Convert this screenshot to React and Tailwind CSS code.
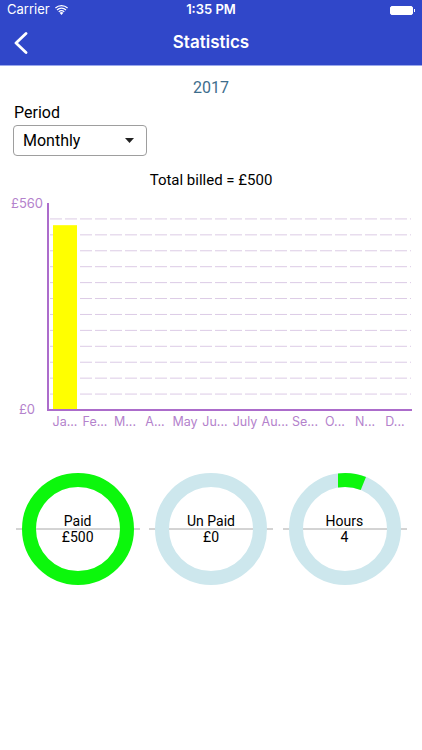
import React from 'react';

const MONTHS = ['Ja...', 'Fe...', 'M...', 'A...', 'May', 'Ju...', 'July', 'Au...', 'Se...', 'O...', 'N...', 'D...'];

function StatusBar() {
  return (
    <div className="relative flex h-[20px] items-center justify-between px-[7px] font-['Inter',sans-serif] text-[13px] text-white">
      <div className="flex items-center gap-[5px]">
        <span>Carrier</span>
        <svg width="13" height="10" viewBox="0 0 13 10" fill="white">
          <path d="M6.5 10 L4.6 7.8 A2.8 2.8 0 0 1 8.4 7.8 Z" />
          <path d="M3.3 6.4 A4.8 4.8 0 0 1 9.7 6.4 L8.9 7.3 A3.6 3.6 0 0 0 4.1 7.3 Z" />
          <path d="M1.6 4.5 A7.3 7.3 0 0 1 11.4 4.5 L10.6 5.4 A6.1 6.1 0 0 0 2.4 5.4 Z" />
          <path d="M0 2.6 A9.6 9.6 0 0 1 13 2.6 L12.2 3.5 A8.4 8.4 0 0 0 0.8 3.5 Z" />
        </svg>
      </div>
      <span className="absolute left-1/2 -translate-x-1/2 font-semibold">1:35 PM</span>
      <div className="flex items-center">
        <div className="h-[9px] w-[23px] rounded-[2px] border border-white bg-white" />
        <div className="ml-[1px] h-[3px] w-[1.5px] bg-white" />
      </div>
    </div>
  );
}

function NavBar() {
  return (
    <div className="relative flex h-[45px] items-center justify-center">
      <svg className="absolute left-[13px] top-[12px]" width="16" height="22" viewBox="0 0 16 22">
        <path d="M13 1.5 L3 11 L13 20.5" fill="none" stroke="white" strokeWidth="2.8" strokeLinecap="round" strokeLinejoin="round" />
      </svg>
      <span className="font-['Inter',sans-serif] text-[17px] font-semibold text-white">Statistics</span>
    </div>
  );
}

function BarChart() {
  const top = 13;
  const bottom = 220;
  const step = (bottom - top) / 13;
  const lines = Array.from({ length: 12 }, (_, i) => top + step * (i + 1));
  const barTop = bottom - (500 / 560) * (bottom - top);
  return (
    <svg width="422" height="245" viewBox="0 0 422 245" className="block">
      {lines.map((y, i) => (
        <line key={i} x1="50" x2="411" y1={y} y2={y} stroke="#dccbe6" strokeWidth="1" strokeDasharray="12 3" />
      ))}
      <rect x="53" y={barTop} width="24" height={bottom - barTop} fill="#ffff00" />
      <line x1="48" x2="48" y1={top} y2={bottom + 1} stroke="#ac6ccb" strokeWidth="2" />
      <line x1="47" x2="412" y1={bottom} y2={bottom} stroke="#ac6ccb" strokeWidth="2" />
      <text x="27" y={top + 5} textAnchor="middle" fontSize="13" fill="#b482cc" fontFamily="Inter, sans-serif">£560</text>
      <text x="27" y={bottom + 4} textAnchor="middle" fontSize="13" fill="#b482cc" fontFamily="Inter, sans-serif">£0</text>
      {MONTHS.map((m, i) => (
        <text key={m} x={65 + i * 30} y={bottom + 16} textAnchor="middle" fontSize="12.5" fill="#b482cc" fontFamily="Inter, sans-serif">{m}</text>
      ))}
    </svg>
  );
}

function Donut({ label, value, full, arc }) {
  return (
    <div className="relative h-[114px] w-[124px]">
      <svg width="124" height="114" viewBox="-62 -57 124 114" className="absolute inset-0">
        <line x1="-62" x2="62" y1="0" y2="0" stroke="#a8a8a8" strokeWidth="1" />
        <circle cx="0" cy="0" r="49" fill="none" stroke={full ? '#0cf70c' : '#cde7ed'} strokeWidth="14" />
        {arc && (
          <path d="M -7 -55.56 A 56 56 0 0 1 20.98 -51.92 L 15.73 -38.94 A 42 42 0 0 0 -7 -41.41 Z" fill="#0cf70c" />
        )}
      </svg>
      <div className="absolute inset-x-0 top-[41px] text-center text-[14px] leading-[17px] text-black">{label}</div>
      <div className="absolute inset-x-0 top-[57px] text-center text-[14px] leading-[17px] text-black">{value}</div>
    </div>
  );
}

export default function App() {
  return (
    <div className="h-[750px] w-[422px] overflow-hidden bg-white font-['Roboto',sans-serif]">
      <div className="bg-[#3047c9]">
        <StatusBar />
        <NavBar />
      </div>
      <div className="h-px bg-[#9aa8ec]" />

      <div className="mt-[12px] text-center text-[16px] leading-[20px] text-[#3d6d8c]">2017</div>

      <div className="mt-[5px] px-[14px] text-[16px] leading-[20px] text-black">Period</div>
      <div className="ml-[13px] mt-[2px] flex h-[31px] w-[134px] items-center justify-between rounded-[4px] border border-[#9e9e9e] pl-[9px] pr-[12px]">
        <span className="text-[16px] text-black">Monthly</span>
        <svg width="9" height="5" viewBox="0 0 9 5">
          <path d="M0 0 L9 0 L4.5 5 Z" fill="#222" />
        </svg>
      </div>

      <div className="mt-[14px] text-center text-[15px] leading-[20px] text-black">Total billed = £500</div>

      <BarChart />

      <div className="mt-[37px] flex gap-[10px] px-[16px]">
        <Donut label="Paid" value="£500" full />
        <Donut label="Un Paid" value="£0" />
        <Donut label="Hours" value="4" arc />
      </div>
    </div>
  );
}
